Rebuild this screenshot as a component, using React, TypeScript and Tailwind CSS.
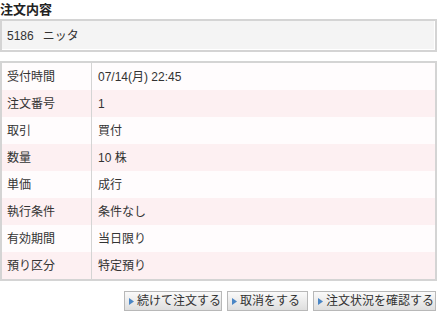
import React from "react";

const rows: [string, string][] = [
  ["受付時間", "07/14(月) 22:45"],
  ["注文番号", "1"],
  ["取引", "買付"],
  ["数量", "10 株"],
  ["単価", "成行"],
  ["執行条件", "条件なし"],
  ["有効期間", "当日限り"],
  ["預り区分", "特定預り"],
];

function Btn({ label, w }: { label: string; w: string }) {
  return (
    <div
      className={`${w} h-[20px] flex items-center whitespace-nowrap border border-[#b8b8b8] bg-gradient-to-b from-[#fafafa] to-[#dedede] text-[12px] text-[#333] pl-[4px]`}
    >
      <svg width="5" height="7" viewBox="0 0 5 7" className="mr-[3px] shrink-0">
        <polygon points="0,0 5,3.5 0,7" fill="#4a86c5" />
      </svg>
      <span className="leading-none">{label}</span>
    </div>
  );
}

export default function App() {
  return (
    <div
      className="w-[438px] h-[313px] bg-white text-[#333] pt-[3px]"
      style={{ fontFamily: '"Liberation Sans", "Noto Sans CJK JP", sans-serif' }}
    >
      <div className="text-[13px] font-bold text-[#222] leading-[14px] h-[16px]">注文内容</div>
      <div className="w-[437px] h-[33px] border-2 border-[#d4d4d4] bg-[#f4f4f4] flex items-center pl-[5px] text-[12px] shadow-[inset_0_-1px_0_#fff,inset_-1px_0_0_#fff]">
        <span>5186</span>
        <span className="ml-[9px]">ニッタ</span>
      </div>
      <div className="mt-[9px] w-[437px] border-2 border-[#d4d4d4] text-[12px]">
        {rows.map(([k, v], i) => (
          <div
            key={k}
            className={`flex h-[27px] items-center ${i % 2 === 0 ? "bg-[#fffcfd]" : "bg-[#fdf0f2]"}`}
          >
            <div className="w-[90px] h-full flex items-center pl-[5px] border-r border-[#d4d4d4]">{k}</div>
            <div className="pl-[6px]">{v}</div>
          </div>
        ))}
      </div>
      <div className="flex justify-end gap-[5px] mt-[10px] pr-[2px]">
        <Btn label="続けて注文する" w="w-[98px]" />
        <Btn label="取消をする" w="w-[81px]" />
        <Btn label="注文状況を確認する" w="w-[123px]" />
      </div>
    </div>
  );
}
